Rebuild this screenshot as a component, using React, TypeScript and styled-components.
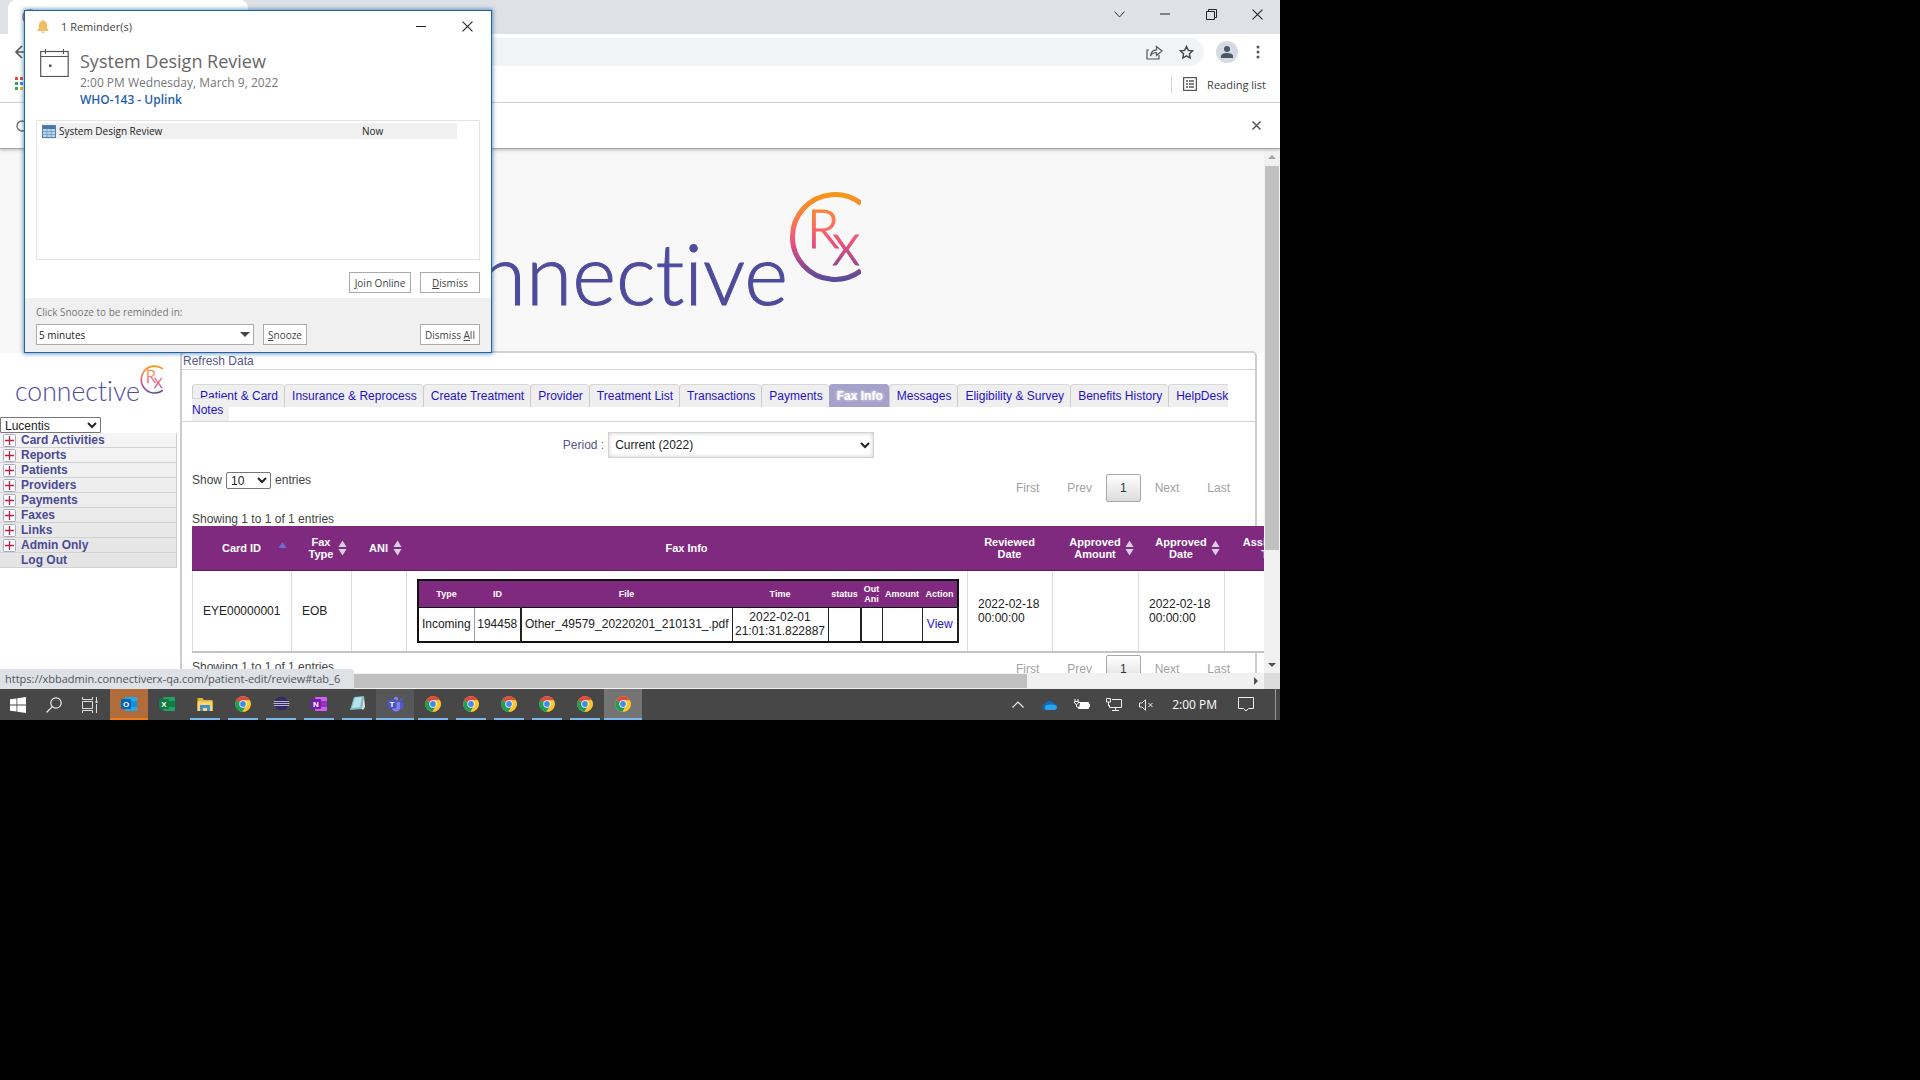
import React from "react";
import styled, { createGlobalStyle, css } from "styled-components";

const ui = `"Open Sans", "Noto Sans", sans-serif`;
const arial = `"Liberation Sans", Arial, sans-serif`;
const purple = "#7f2a7f";
const violet = "#4b4a94";

const GlobalStyle = createGlobalStyle`
  * { box-sizing: border-box; }
  body { margin: 0; background: #000; }
  button { font: inherit; color: inherit; padding: 0; border: 0; background: none; }
  ul { list-style: none; margin: 0; padding: 0; }
  svg { display: block; flex: none; }
`;

const Desktop = styled.div`
  display: grid;
  grid-template: 2fr 1fr / 2fr 1fr;
  height: 100vh;
  background: #000;
`;

const Screen = styled.div`
  position: relative;
  display: flex;
  flex-direction: column;
  min-width: 0;
  min-height: 0;
  overflow: hidden;
  background: #fff;
  font-family: ${arial};
  font-size: 12px;
`;

/* ---------- browser ---------- */

const TabStrip = styled.div`
  display: flex;
  justify-content: space-between;
  height: 34px;
  padding-left: 8px;
  background: #dee1e6;
  flex: none;
`;
const BrowserTab = styled.div`
  display: flex;
  align-items: center;
  width: 240px;
  padding-left: 14px;
  border-radius: 8px 8px 0 0;
  background: #fff;
`;
const WindowControls = styled.div`
  display: flex;
  height: 28px;
`;
const WindowButton = styled.button`
  display: grid;
  place-items: center;
  width: 46px;
`;
const Toolbar = styled.div`
  display: flex;
  align-items: center;
  gap: 12px;
  height: 36px;
  padding: 0 14px;
  flex: none;
`;
const Omnibox = styled.div`
  flex: 1;
  display: flex;
  align-items: center;
  justify-content: flex-end;
  gap: 16px;
  height: 28px;
  padding-right: 10px;
  border-radius: 14px;
  background: #f1f3f4;
`;
const IconButton = styled.button`
  display: grid;
  place-items: center;
`;
const Avatar = styled.button`
  display: grid;
  place-items: center;
  width: 22px;
  height: 22px;
  border-radius: 50%;
  background: #d6dae2;
`;
const BookmarksBar = styled.div`
  display: flex;
  align-items: center;
  justify-content: space-between;
  height: 33px;
  padding: 0 14px 4px;
  border-bottom: 1px solid #d5d7da;
  flex: none;
`;
const ReadingList = styled.button`
  display: flex;
  align-items: center;
  gap: 10px;
  height: 17px;
  padding-left: 11px;
  border-left: 1px solid #d0d2d5;
  font-family: ${ui};
  font-size: 11px;
  color: #3c4043;
`;
const InfoBar = styled.div`
  position: relative;
  display: flex;
  align-items: center;
  justify-content: space-between;
  height: 46px;
  padding: 0 19px 0 16px;
  border-bottom: 1px solid #a6a6a6;
  box-shadow: 0 1px 3px #bbb;
  flex: none;
`;

/* ---------- viewport and scroll bars ---------- */

const Viewport = styled.div`
  flex: 1;
  min-height: 0;
  display: grid;
  grid-template: minmax(0, 1fr) 16px / minmax(0, 1fr) 16px;
`;
const Page = styled.div`
  overflow: hidden;
`;
const Scrollbar = styled.div<{ $row?: boolean }>`
  display: flex;
  flex-direction: ${(p) => (p.$row ? "row" : "column")};
  background: #f1f1f1;
`;
const ScrollArrow = styled.button`
  display: grid;
  place-items: center;
  width: 16px;
  height: 16px;
`;
const ScrollThumb = styled.div<{ $share: number }>`
  flex: ${(p) => p.$share};
  margin: 1px;
  background: #c0c0c0;
`;
const ScrollRest = styled.div<{ $share: number }>`
  flex: ${(p) => p.$share};
`;
const ScrollCorner = styled.div`
  background: #dcdcdc;
`;

/* ---------- page ---------- */

const Banner = styled.header`
  height: 204px;
  padding: 42px 0 0 388px;
  background: linear-gradient(#f3f3f3, #f8f8f8 8px);
`;
const Columns = styled.div`
  display: grid;
  grid-template-columns: 180px minmax(0, 1fr);
`;
const Sidebar = styled.aside`
  padding-top: 12px;
`;
const SideLogo = styled.div`
  height: 52px;
  padding-left: 13px;
`;
const ProductSelect = styled.select`
  display: block;
  width: 101px;
  height: 16px;
  border: 1px solid #767676;
  border-radius: 1px;
  background: #fff;
  color: #222;
  font: 12px ${arial};
`;
const SideMenu = styled.ul`
  margin-right: 3px;
  border-right: 1px solid #d0d0d0;
  background: linear-gradient(#f5f5f5, #e4e4e4);
`;
const SideItem = styled.li`
  display: grid;
  grid-template-columns: 21px 1fr;
  align-items: center;
  height: 15px;
  border-bottom: 1px solid #d2d2d4;
  padding-left: 3px;
`;
const SideLink = styled.a`
  grid-column: 2;
  margin-left: -3px;
  font-weight: bold;
  line-height: 14px;
  color: ${violet};
  text-decoration: none;
`;

const Frame = styled.main`
  min-height: 400px;
  margin-right: 7px;
  border: 2px solid #ccc;
  border-top-color: #d2d2d2;
  border-radius: 5px;
  margin-top: -2px;
  background: #fff;
`;
const Refresh = styled.a`
  display: block;
  padding: 1px;
  border-bottom: 1px solid #d4d4d4;
  line-height: 14px;
  color: #55558f;
  text-decoration: none;
`;
const Tabs = styled.ul`
  padding: 19px 0 4px 10px;
  border-bottom: 1px solid #d4d4d4;
  line-height: 14px;
`;
const TabItem = styled.li`
  display: inline;
`;
const TabLink = styled.a<{ $active?: boolean }>`
  padding: 4px 6px 4px 7px;
  border-left: 1px solid #ccc;
  border-top: 1px solid #d8d8d8;
  border-radius: 4px 4px 0 0;
  background: #efeff0;
  color: #1f12c8;
  text-decoration: none;
  ${(p) =>
    p.$active &&
    css`
      background: #a5a1cb;
      border-color: #a5a1cb;
      color: #fff;
      font-weight: bold;
      text-shadow: 0 0 3px #fff;
    `}
`;
const PeriodRow = styled.div`
  display: flex;
  align-items: center;
  justify-content: center;
  gap: 4px;
  padding: 10px 0 0;
  color: #55558f;
`;
const PeriodSelect = styled.select`
  width: 266px;
  height: 26px;
  padding: 0 2px;
  border: 1px solid #d2d2d2;
  border-radius: 0;
  background: #fff;
  box-shadow: inset 0 0 4px #ccc;
  color: #222;
  font: 12px ${arial};
`;
const ListHead = styled.div`
  display: flex;
  justify-content: space-between;
  align-items: center;
  padding: 12px 11px 0 10px;
  height: 48px;
  color: #444;
`;
const LengthLabel = styled.label`
  display: flex;
  align-items: center;
  gap: 4px;
  padding-bottom: 16px;
`;
const LengthSelect = styled.select`
  width: 45px;
  height: 17px;
  border: 1px solid #767676;
  border-radius: 2px;
  background: #fff;
  color: #222;
  font: 12px ${arial};
`;
const Pager = styled.nav`
  display: flex;
  align-items: center;
`;
const PageButton = styled.button<{ $current?: boolean }>`
  height: 28px;
  padding: 0 13px;
  border: 1px solid transparent;
  border-radius: 2px;
  color: #a2a2a2;
  ${(p) =>
    p.$current &&
    css`
      border-color: #a8a8a8;
      background: linear-gradient(#fff, #dcdcdc);
      color: #333;
    `}
`;
const Summary = styled.div`
  padding: 6px 0 0 10px;
  line-height: 14px;
  color: #444;
`;
const FootRow = styled.div`
  display: flex;
  justify-content: space-between;
  padding: 2px 11px 0 10px;
  color: #444;
  line-height: 24px;
`;
const DataTable = styled.table`
  position: relative;
  table-layout: fixed;
  width: 1119px;
  margin-left: 10px;
  border-spacing: 0;
  border-bottom: 2px solid #c4c4c4;
  background: #fff;
  color: #222;
`;
const HeadCell = styled.th`
  height: 45px;
  padding: 0 4px;
  border-bottom: 1px solid #5c1c5c;
  background: ${purple};
  color: #fff;
  font-size: 11px;
  line-height: 12px;
`;
const HeadInner = styled.div<{ $sort?: boolean }>`
  display: flex;
  align-items: center;
  justify-content: center;
  ${(p) =>
    p.$sort &&
    css`
      display: grid;
      grid-template-columns: minmax(0, 1fr) auto minmax(0, 1fr);
      svg {
        grid-column: 3;
        justify-self: end;
      }
    `}
`;
const HeadText = styled.span<{ $sort?: boolean }>`
  ${(p) => p.$sort && "grid-column: 2;"}
  white-space: pre;
`;
const BodyCell = styled.td`
  height: 80px;
  padding: 0 10px;
  border-left: 1px solid #ddd;
  line-height: 14px;
`;
const FaxTable = styled.table`
  table-layout: fixed;
  width: 540px;
  border: 2px solid #111;
  border-collapse: collapse;
  text-align: center;
`;
const FaxHead = styled.th`
  height: 27px;
  padding: 0;
  border-bottom: 1px solid #111;
  background: ${purple};
  color: #fff;
  font-size: 9px;
  line-height: 10px;
`;
const FaxCell = styled.td<{ $rule: string }>`
  height: 35px;
  padding: 0;
  border-right: ${(p) => p.$rule};
  line-height: 14px;
`;
const ViewLink = styled.a`
  color: #1f12c8;
  text-decoration: none;
`;

const StatusBubble = styled.div`
  position: absolute;
  left: 0;
  bottom: 31px;
  padding: 0 14px 0 5px;
  border-radius: 0 4px 0 0;
  background: #dee1e6;
  color: #50545a;
  font-family: ${ui};
  font-size: 11px;
  line-height: 20px;
`;

/* ---------- taskbar ---------- */

const Taskbar = styled.footer`
  display: flex;
  justify-content: space-between;
  height: 31px;
  background: #474747;
  flex: none;
`;
const TaskGroup = styled.div`
  display: flex;
`;
const SystemButton = styled.button`
  display: grid;
  place-items: center;
  width: 36px;
`;
const AppButtons = styled.div`
  display: flex;
  margin-left: 2px;
`;
const AppButton = styled.button<{ $tone?: string; $line?: string; $wide?: boolean }>`
  display: grid;
  grid-template-rows: 1fr 2px;
  justify-items: center;
  align-items: center;
  width: 38px;
  background: ${(p) => p.$tone || "none"};
  &::after {
    content: "";
    width: ${(p) => (p.$wide ? "38px" : "30px")};
    height: 2px;
    background: ${(p) => p.$line || "transparent"};
  }
`;
const Tray = styled.div`
  display: flex;
  align-items: center;
  color: #fff;
  font-family: ${ui};
  font-size: 12px;
`;
const TrayButton = styled.button`
  display: grid;
  place-items: center;
  width: 32px;
`;
const Clock = styled.time`
  padding: 0 13px 0 10px;
`;
const ShowDesktop = styled.button`
  width: 5px;
  height: 31px;
  margin-left: 13px;
  border-left: 1px solid #999;
`;

/* ---------- reminder window ---------- */

const Reminder = styled.section`
  position: absolute;
  left: 24px;
  top: 10px;
  width: 468px;
  border: 1px solid #1c65ab;
  background: #fff;
  box-shadow: 0 0 4px 1px rgba(30, 90, 150, 0.6);
  font-family: ${ui};
  font-size: 10px;
  color: #444;
`;
const ReminderTitle = styled.div`
  display: flex;
  align-items: center;
  height: 30px;
  padding: 0 1px 0 12px;
  font-size: 11px;
`;
const ReminderName = styled.span`
  flex: 1;
  padding-left: 12px;
`;
const ReminderInfo = styled.div`
  display: grid;
  grid-template-columns: auto 1fr;
  gap: 11px;
  padding: 8px 15px 12px;
`;
const Heading = styled.h1`
  margin: 0;
  font-size: 18px;
  font-weight: 400;
  line-height: 25px;
  color: #666;
`;
const When = styled.p`
  margin: 0;
  font-size: 12px;
  line-height: 17px;
  color: #777;
`;
const Where = styled.p`
  margin: 0;
  font-size: 12px;
  font-weight: 600;
  line-height: 17px;
  color: #1f62ab;
`;
const ReminderList = styled.ul`
  height: 140px;
  margin: 0 11px;
  padding: 2px 22px 2px 5px;
  border: 1px solid #e4e4e4;
`;
const ReminderRow = styled.li`
  display: grid;
  grid-template-columns: auto 300px 1fr;
  align-items: center;
  gap: 3px;
  height: 16px;
  background: #f0f0f0;
  color: #222;
`;
const Actions = styled.div`
  display: flex;
  justify-content: flex-end;
  gap: 9px;
  padding: 12px 11px 5px;
`;
const WinButton = styled.button<{ $width: number }>`
  width: ${(p) => p.$width}px;
  height: 21px;
  border: 1px solid #ababab;
  background: #fff;
  color: #444;
  white-space: nowrap;
`;
const SnoozeArea = styled.div`
  padding: 5px 11px 7px;
  background: #f0f0f0;
`;
const SnoozeLabel = styled.label`
  display: block;
  line-height: 18px;
  margin-bottom: 3px;
  color: #777;
`;
const SnoozeRow = styled.div`
  display: flex;
  justify-content: space-between;
`;
const SnoozeLeft = styled.div`
  display: flex;
  gap: 9px;
`;
const SnoozePicker = styled.div`
  display: grid;
  align-items: center;
  > * {
    grid-area: 1 / 1;
  }
  svg {
    justify-self: end;
    margin-right: 4px;
    pointer-events: none;
  }
`;
const SnoozeSelect = styled.select`
  appearance: none;
  width: 218px;
  height: 21px;
  padding: 0 2px;
  border: 1px solid #ababab;
  border-radius: 0;
  background: #fff;
  color: #222;
  font: 10px ${ui};
`;

/* ---------- drawings ---------- */

const LogoText = styled.text`
  font-family: Lato, sans-serif;
  font-weight: 300;
  font-variant-ligatures: none;
`;

const Logo = ({ width, id, heavy }: { width: number; id: string; heavy?: boolean }) => (
  <svg width={width} viewBox="0 0 473 124" role="img" aria-label="connectiveRx">
    <defs>
      <linearGradient id={id} gradientUnits="userSpaceOnUse" x1="0" y1="1" x2="0" y2="91">
        <stop offset="0" stopColor="#f39a14" />
        <stop offset="0.3" stopColor="#fb7a4a" />
        <stop offset="0.55" stopColor="#f0507c" />
        <stop offset="0.8" stopColor="#9a4a8c" />
        <stop offset="1" stopColor="#4f4b9c" />
      </linearGradient>
    </defs>
    <LogoText x="400" y="114" textAnchor="end" fill="#4f4b9c" stroke="#4f4b9c" strokeWidth={heavy ? 1 : 0} fontSize="84">
      connective
    </LogoText>
    <path d="M473 12.400A42.500 42.500 0 1 0 473 79.600" fill="none" stroke={`url(#${id})`} strokeWidth="5" />
    <g fill={`url(#${id})`} stroke={`url(#${id})`} strokeWidth="1">
      <LogoText x="419" y="57" fontSize="53">R</LogoText>
      <LogoText x="444" y="74" fontSize="60">x</LogoText>
    </g>
  </svg>
);

const Cross = ({ size, color = "#222", weight = 1 }: { size: number; color?: string; weight?: number }) => (
  <svg width={size} height={size} viewBox="0 0 10 10" stroke={color} strokeWidth={weight}>
    <path d="M0.5 0.5L9.5 9.5M9.5 0.5L0.5 9.5" />
  </svg>
);

const Triangle = ({ dir, color = "#505050" }: { dir: "up" | "down" | "right"; color?: string }) => (
  <svg width="8" height="8" viewBox="0 0 8 8" fill={color}>
    <path d={{ up: "M0 6h8L4 2z", down: "M0 2h8L4 6z", right: "M2 0v8l4-4z" }[dir]} />
  </svg>
);

const SortIcon = ({ sorted }: { sorted?: boolean }) => (
  <svg width="9" height="16" viewBox="0 0 9 16">
    {sorted ? (
      <path d="M0.5 8h8L4.5 2z" fill="#6a6fd0" />
    ) : (
      <path d="M0.500 7h8L4.500 0.500zM0.500 9h8L4.500 15.500z" fill="#d8cfe0" />
    )}
  </svg>
);

const PlusBox = () => (
  <svg width="13" height="13" viewBox="0 0 13 13">
    <rect x="0.5" y="0.5" width="12" height="12" rx="1" fill="#fff" stroke="#a9a9bd" />
    <path d="M2 6.500h9M6.500 2v9" stroke="#b81d4a" strokeWidth="1.300" />
  </svg>
);

const ChromeIcon = () => (
  <svg width="16" height="16" viewBox="0 0 16 16">
    <circle cx="8" cy="8" r="7.800" fill="#fbc62e" />
    <path d="M8 8L1.200 4.200A7.800 7.800 0 0 1 14.800 4.200H8z" fill="#dd4b3e" />
    <path d="M8 8L1.200 4.200A7.800 7.800 0 0 0 7.600 15.800L11 9.600z" fill="#1f9d58" />
    <path d="M8 4.200h6.800A7.800 7.800 0 0 1 7.600 15.800L11.200 9.800z" fill="#fbc62e" />
    <circle cx="8" cy="8" r="3.700" fill="#fff" />
    <circle cx="8" cy="8" r="2.900" fill="#4a86ea" />
  </svg>
);

const OfficeIcon = ({ letter, back, mid, front }: { letter: string; back: string; mid: string; front: string }) => (
  <svg width="17" height="16" viewBox="0 0 17 16">
    <rect x="4" y="1" width="12" height="14" rx="1" fill={back} />
    <rect x="10" y="5" width="6" height="6" fill={mid} />
    <rect x="0" y="3" width="10" height="10" rx="1" fill={front} />
    <text x="5" y="11" fill="#fff" textAnchor="middle" fontFamily="Liberation Sans, sans-serif" fontWeight="bold" fontSize="8">
      {letter}
    </text>
  </svg>
);

const TeamsIcon = () => (
  <svg width="17" height="16" viewBox="0 0 17 16">
    <circle cx="9" cy="3" r="2.300" fill="#7b83eb" />
    <circle cx="14" cy="4" r="1.700" fill="#5059c9" />
    <path d="M11 6h5.500v4.500a3 3 0 0 1-4.500 2.500z" fill="#5059c9" />
    <path d="M5 6h8v5.500a4 4 0 0 1-8 0z" fill="#7b83eb" />
    <rect x="0.500" y="3.500" width="9" height="9" rx="1" fill="#4b53bc" />
    <text x="5" y="11" fill="#fff" textAnchor="middle" fontFamily="Liberation Sans, sans-serif" fontWeight="bold" fontSize="8">
      T
    </text>
  </svg>
);

const FolderIcon = () => (
  <svg width="16" height="14" viewBox="0 0 16 14">
    <path d="M0.500 1h5l1.500 2h8.500v11h-15z" fill="#e9ae35" />
    <path d="M0.500 4.500h15V14h-15z" fill="#fbd76b" />
    <path d="M3 14V8h10v6h-3v-3H6v3z" fill="#3f8fd2" />
  </svg>
);

const EclipseIcon = () => (
  <svg width="17" height="15" viewBox="0 0 17 15">
    <circle cx="8.500" cy="7.500" r="7" fill="#352a63" />
    <path d="M1 5.500h15M0.500 7.500h16M1 9.500h15" stroke="#c9c3dc" strokeWidth="0.900" />
  </svg>
);

const NotepadIcon = () => (
  <svg width="16" height="15" viewBox="0 0 16 15">
    <path d="M5 1l10-1-2 13-12 1z" fill="#7fc0cf" />
    <path d="M6 2l7-1-2 10-8 1z" fill="#b9e2e8" />
    <path d="M13 13l2-13 1 11-2 3z" fill="#e7e7e0" />
  </svg>
);

const BellIcon = () => (
  <svg width="12" height="13" viewBox="0 0 12 13" fill="#f0bd62">
    <path d="M6 0a1 1 0 0 1 1 1c2.200.5 3 2.200 3 4.200V8l1.500 2v1H.5v-1L2 8V5.200C2 3.200 2.800 1.500 5 1a1 1 0 0 1 1-1z" />
    <path d="M4.500 11.500h3a1.500 1.500 0 0 1-3 0z" />
  </svg>
);

/* ---------- data ---------- */

const menu = ["Card Activities", "Reports", "Patients", "Providers", "Payments", "Faxes", "Links", "Admin Only", "Log Out"];

const tabs = [
  "Patient & Card", "Insurance & Reprocess", "Create Treatment", "Provider", "Treatment List", "Transactions",
  "Payments", "Fax Info", "Messages", "Eligibility & Survey", "Benefits History", "HelpDesk Notes",
];

const columns: { title: string; width: number; sort?: "none" | "asc" }[] = [
  { title: "Card ID", width: 99, sort: "asc" },
  { title: "Fax\nType", width: 60, sort: "none" },
  { title: "ANI", width: 55, sort: "none" },
  { title: "Fax Info", width: 561 },
  { title: "Reviewed\nDate", width: 85 },
  { title: "Approved\nAmount", width: 86, sort: "none" },
  { title: "Approved\nDate", width: 86, sort: "none" },
  { title: "Assigned\nTo", width: 87 },
];

const thin = "1px solid #222";
const thick = "2px solid #222";
const faxColumns: { title: string; width: number; rule: string; value?: string }[] = [
  { title: "Type", width: 56, rule: "1px solid #999", value: "Incoming" },
  { title: "ID", width: 47, rule: thick, value: "194458" },
  { title: "File", width: 211, rule: thin, value: "Other_49579_20220201_210131_.pdf" },
  { title: "Time", width: 96, rule: thin, value: "2022-02-01 21:01:31.822887" },
  { title: "status", width: 33, rule: thick },
  { title: "Out Ani", width: 21, rule: thin },
  { title: "Amount", width: 40, rule: thin },
  { title: "Action", width: 36, rule: thick },
];

const Pagination = ({ label }: { label: string }) => (
  <Pager aria-label={label}>
    {["First", "Prev", "1", "Next", "Last"].map((t) => (
      <PageButton key={t} type="button" $current={t === "1"}>{t}</PageButton>
    ))}
  </Pager>
);

const officeApps = {
  outlook: <OfficeIcon letter="O" back="#28a8ea" mid="#1490df" front="#0364b8" />,
  excel: <OfficeIcon letter="X" back="#21a366" mid="#107c41" front="#107c41" />,
  onenote: <OfficeIcon letter="N" back="#ca64ea" mid="#9332bf" front="#7719aa" />,
};

const blue = "#7ab8ea";
const apps: { name: string; icon: React.ReactNode; tone?: string; line?: string; wide?: boolean }[] = [
  { name: "Outlook", icon: officeApps.outlook, tone: "#b06d3b", line: "#f47a1c", wide: true },
  { name: "Excel", icon: officeApps.excel },
  { name: "File Explorer", icon: <FolderIcon />, line: blue },
  { name: "Chrome", icon: <ChromeIcon />, line: blue },
  { name: "Eclipse", icon: <EclipseIcon />, line: blue },
  { name: "OneNote", icon: officeApps.onenote, line: blue },
  { name: "Notepad", icon: <NotepadIcon />, line: blue },
  { name: "Teams", icon: <TeamsIcon />, tone: "#565759", line: blue, wide: true },
  ...[1, 2, 3, 4, 5].map((n) => ({ name: `Chrome window ${n}`, icon: <ChromeIcon />, line: blue })),
  { name: "Chrome window 6", icon: <ChromeIcon />, tone: "#747474", line: blue, wide: true },
];

/* ---------- parts ---------- */

const Browser = () => (
  <>
    <TabStrip>
      <BrowserTab>
        <svg width="16" height="16" viewBox="0 0 16 16" fill="none" stroke="#c0566a" strokeWidth="1.500"><circle cx="8" cy="8" r="7" /></svg>
      </BrowserTab>
      <WindowControls>
        <WindowButton type="button" aria-label="Search tabs">
          <svg width="11" height="7" viewBox="0 0 11 7" fill="none" stroke="#333"><path d="M0.500 0.500L5.500 6L10.500 0.500" /></svg>
        </WindowButton>
        <WindowButton type="button" aria-label="Minimize">
          <svg width="10" height="2" viewBox="0 0 10 2" fill="#222"><path d="M0 0.500h10v1H0z" /></svg>
        </WindowButton>
        <WindowButton type="button" aria-label="Restore">
          <svg width="11" height="11" viewBox="0 0 11 11" fill="none" stroke="#222"><path d="M0.500 2.500h8v8h-8zM2.500 2.500v-2h8v8h-2" /></svg>
        </WindowButton>
        <WindowButton type="button" aria-label="Close"><Cross size={11} /></WindowButton>
      </WindowControls>
    </TabStrip>
    <Toolbar>
      <IconButton type="button" aria-label="Back">
        <svg width="14" height="14" viewBox="0 0 14 14" fill="none" stroke="#555" strokeWidth="1.600"><path d="M14 7H2M8 1L2 7l6 6" /></svg>
      </IconButton>
      <Omnibox>
        <IconButton type="button" aria-label="Share">
          <svg width="17" height="15" viewBox="0 0 17 15" fill="none" stroke="#555" strokeWidth="1.200">
            <path d="M3 5H1v9h12v-4M4.500 11C5 7 7.500 5 10.500 4.800V1.500L16 6l-5.500 4.500V7.500C8 7.500 6 8.500 4.500 11z" />
          </svg>
        </IconButton>
        <IconButton type="button" aria-label="Bookmark">
          <svg width="15" height="14" viewBox="0 0 15 14" fill="none" stroke="#444" strokeWidth="1.400">
            <path d="M7.500 1.500l1.800 3.900 4.200.5-3.100 2.900.8 4.200-3.700-2.100-3.700 2.100.8-4.200L1.500 5.900l4.200-.5z" />
          </svg>
        </IconButton>
      </Omnibox>
      <Avatar type="button" aria-label="Profile">
        <svg width="14" height="14" viewBox="0 0 14 14" fill="#4c5868"><circle cx="7" cy="4" r="3" /><path d="M1 13v-2c0-2 3-3 6-3s6 1 6 3v2z" /></svg>
      </Avatar>
      <IconButton type="button" aria-label="Menu">
        <svg width="16" height="14" viewBox="0 0 16 14" fill="#555"><circle cx="8" cy="2" r="1.500" /><circle cx="8" cy="7" r="1.500" /><circle cx="8" cy="12" r="1.500" /></svg>
      </IconButton>
    </Toolbar>
    <BookmarksBar>
      <IconButton type="button" aria-label="Apps">
        <svg width="14" height="14" viewBox="0 0 14 14">
          {["#ea4335", "#ea4335", "#ea4335", "#34a853", "#4285f4", "#fbbc05", "#34a853", "#fbbc05", "#fbbc05"].map((c, i) => (
            <rect key={i} x={1 + (i % 3) * 5} y={Math.floor(i / 3) * 5} width="3" height="3" fill={c} />
          ))}
        </svg>
      </IconButton>
      <ReadingList type="button">
        <svg width="14" height="14" viewBox="0 0 14 14" fill="none" stroke="#555">
          <rect x="0.500" y="0.500" width="13" height="13" strokeWidth="1.400" />
          <path d="M3 4h2M6 4h5M3 7h2M6 7h5M3 10h2M6 10h5" strokeWidth="1.500" />
        </svg>
        Reading list
      </ReadingList>
    </BookmarksBar>
    <InfoBar>
      <svg width="12" height="12" viewBox="0 0 12 12" fill="none" stroke="#666" strokeWidth="1.300"><circle cx="6" cy="6" r="5" /></svg>
      <IconButton type="button" aria-label="Dismiss message"><Cross size={9} color="#555" weight={1.6} /></IconButton>
    </InfoBar>
  </>
);

const FaxDetails = () => (
  <FaxTable>
    <colgroup>{faxColumns.map((c) => <col key={c.title} width={c.width} />)}</colgroup>
    <thead><tr>{faxColumns.map((c) => <FaxHead key={c.title}>{c.title}</FaxHead>)}</tr></thead>
    <tbody>
      <tr>
        {faxColumns.map((c) => (
          <FaxCell key={c.title} $rule={c.rule}>
            {c.title === "Action" ? <ViewLink href="#view">View</ViewLink> : c.value}
          </FaxCell>
        ))}
      </tr>
    </tbody>
  </FaxTable>
);

const Content = () => (
  <Frame>
    <Refresh href="#refresh">Refresh Data</Refresh>
    <Tabs>
      {tabs.map((t, i) => (
        <TabItem key={t}><TabLink href={`#tab_${i}`} $active={t === "Fax Info"}>{t}</TabLink></TabItem>
      ))}
    </Tabs>
    <PeriodRow>
      <label htmlFor="period">Period :</label>
      <PeriodSelect id="period"><option>Current (2022)</option></PeriodSelect>
    </PeriodRow>
    <ListHead>
      <LengthLabel>
        Show
        <LengthSelect><option>10</option></LengthSelect>
        entries
      </LengthLabel>
      <Pagination label="Pages" />
    </ListHead>
    <Summary>Showing 1 to 1 of 1 entries</Summary>
    <DataTable>
      <colgroup>{columns.map((c) => <col key={c.title} width={c.width} />)}</colgroup>
      <thead>
        <tr>
          {columns.map((c) => (
            <HeadCell key={c.title}>
              <HeadInner $sort={!!c.sort}>
                <HeadText $sort={!!c.sort}>{c.title}</HeadText>
                {c.sort && <SortIcon sorted={c.sort === "asc"} />}
              </HeadInner>
            </HeadCell>
          ))}
        </tr>
      </thead>
      <tbody>
        <tr>
          <BodyCell>EYE00000001</BodyCell>
          <BodyCell>EOB</BodyCell>
          <BodyCell />
          <BodyCell><FaxDetails /></BodyCell>
          <BodyCell>2022-02-18 00:00:00</BodyCell>
          <BodyCell />
          <BodyCell>2022-02-18 00:00:00</BodyCell>
          <BodyCell />
        </tr>
      </tbody>
    </DataTable>
    <FootRow>
      <span>Showing 1 to 1 of 1 entries</span>
      <Pagination label="Pages below the table" />
    </FootRow>
  </Frame>
);

const ReminderWindow = () => (
  <Reminder>
    <ReminderTitle>
      <BellIcon />
      <ReminderName>1 Reminder(s)</ReminderName>
      <WindowButton type="button" aria-label="Minimize reminders">
        <svg width="10" height="1" viewBox="0 0 10 1" fill="#222"><path d="M0 0h10v1H0z" /></svg>
      </WindowButton>
      <WindowButton type="button" aria-label="Close reminders"><Cross size={11} /></WindowButton>
    </ReminderTitle>
    <ReminderInfo>
      <svg width="29" height="28" viewBox="0 0 29 28" fill="none" stroke="#555">
        <rect x="0.700" y="2.500" width="27.500" height="25" strokeWidth="1.200" />
        <path d="M1 7.500h27M5.500 0v5M23.500 0v5" />
        <rect x="9.500" y="16" width="1.500" height="1.500" fill="#444" />
      </svg>
      <div>
        <Heading>System Design Review</Heading>
        <When>2:00 PM Wednesday, March 9, 2022</When>
        <Where>WHO-143 - Uplink</Where>
      </div>
    </ReminderInfo>
    <ReminderList>
      <ReminderRow>
        <svg width="14" height="13" viewBox="0 0 14 13">
          <rect x="0.500" y="0.500" width="13" height="12" fill="#b9d5ee" stroke="#5a7fa6" />
          <path d="M1 2.500h12" stroke="#4a78a8" strokeWidth="3" />
          <path d="M5 4v8M9 4v8M1 6.500h12M1 9.500h12" stroke="#7ba3c8" />
        </svg>
        <span>System Design Review</span>
        <span>Now</span>
      </ReminderRow>
    </ReminderList>
    <Actions>
      <WinButton type="button" $width={62}><u>J</u>oin Online</WinButton>
      <WinButton type="button" $width={60}><u>D</u>ismiss</WinButton>
    </Actions>
    <SnoozeArea>
      <SnoozeLabel htmlFor="snooze">Click Snooze to be reminded in:</SnoozeLabel>
      <SnoozeRow>
        <SnoozeLeft>
          <SnoozePicker>
            <SnoozeSelect id="snooze"><option>5 minutes</option></SnoozeSelect>
            <svg width="10" height="5" viewBox="0 0 10 5" fill="#444"><path d="M0 0h10L5 5z" /></svg>
          </SnoozePicker>
          <WinButton type="button" $width={44}><u>S</u>nooze</WinButton>
        </SnoozeLeft>
        <WinButton type="button" $width={60}>Dismiss <u>A</u>ll</WinButton>
      </SnoozeRow>
    </SnoozeArea>
  </Reminder>
);

const TaskbarRow = () => (
  <Taskbar>
    <TaskGroup>
      <SystemButton type="button" aria-label="Start">
        <svg width="16" height="16" viewBox="0 0 16 16" fill="#fff"><path d="M0 2.300L6.500 1.400V7.600H0zM7.300 1.300L16 0v7.600H7.300zM0 8.400h6.500v6.200L0 13.700zM7.300 8.400H16V16l-8.700-1.300z" /></svg>
      </SystemButton>
      <SystemButton type="button" aria-label="Search">
        <svg width="16" height="16" viewBox="0 0 16 16" fill="none" stroke="#eee" strokeWidth="1.200"><circle cx="10" cy="6" r="5.200" /><path d="M6.300 9.700L0.500 15.500" /></svg>
      </SystemButton>
      <SystemButton type="button" aria-label="Task view">
        <svg width="16" height="16" viewBox="0 0 16 16" fill="none" stroke="#ddd"><path d="M0.500 0v2.500h10V0M0.500 16v-2.500h10V16M0.500 4.500h10v7h-10zM14.500 0v4M14.500 7v9" /><rect x="13.500" y="4" width="2" height="2" fill="#ddd" stroke="none" /></svg>
      </SystemButton>
      <AppButtons>
        {apps.map((a) => (
          <AppButton key={a.name} type="button" aria-label={a.name} $tone={a.tone} $line={a.line} $wide={a.wide}>{a.icon}</AppButton>
        ))}
      </AppButtons>
    </TaskGroup>
    <Tray>
      <TrayButton type="button" aria-label="Show hidden icons">
        <svg width="12" height="7" viewBox="0 0 12 7" fill="none" stroke="#eee" strokeWidth="1.200"><path d="M0.500 6.500L6 1l5.500 5.500" /></svg>
      </TrayButton>
      <TrayButton type="button" aria-label="OneDrive">
        <svg width="16" height="10" viewBox="0 0 16 10"><path d="M3.500 10a3.300 3.300 0 0 1-.3-6.500A5 5 0 0 1 12 3.800 3.200 3.200 0 0 1 13 10z" fill="#0f6cbd" /><path d="M4 10a3 3 0 0 1 1-5l3-.5 5 .5a2.600 2.600 0 0 1 0 5z" fill="#2aa5ec" /></svg>
      </TrayButton>
      <TrayButton type="button" aria-label="Battery">
        <svg width="16" height="11" viewBox="0 0 16 11" fill="none" stroke="#fff"><path d="M5 3.500h9.500v6H4.500V8" /><path d="M6 4h8v5H5z" fill="#fff" stroke="none" /><path d="M15.500 5v3M1 0v2M4 0v2M0.500 2.500h4v1.500l-2 1.500-2-1.500zM2.500 5v3h2" /></svg>
      </TrayButton>
      <TrayButton type="button" aria-label="Network">
        <svg width="16" height="13" viewBox="0 0 16 13" fill="none" stroke="#eee"><path d="M6 1.500h9.500v8h-12V7M9.500 9.500v3M6 12.500h7M0.500 0.500h4V4h-4zM2.500 4v4" /></svg>
      </TrayButton>
      <TrayButton type="button" aria-label="Volume muted">
        <svg width="14" height="12" viewBox="0 0 14 12" fill="none" stroke="#eee"><path d="M0.500 4h2.500L6.500 0.800v10.400L3 8H0.500zM9.500 4l4 4M13.500 4l-4 4" /></svg>
      </TrayButton>
      <Clock>2:00 PM</Clock>
      <TrayButton type="button" aria-label="Notifications">
        <svg width="16" height="15" viewBox="0 0 16 15" fill="none" stroke="#eee"><path d="M0.500 0.500h15v11h-5L8 14l-2.500-2.500h-5z" /></svg>
      </TrayButton>
      <ShowDesktop type="button" aria-label="Show desktop" />
    </Tray>
  </Taskbar>
);

export default function App() {
  return (
    <Desktop>
      <GlobalStyle />
      <Screen>
        <Browser />
        <Viewport>
          <Page>
            <Banner><Logo width={473} id="logo-large" heavy /></Banner>
            <Columns>
              <Sidebar>
                <SideLogo><Logo width={150} id="logo-small" /></SideLogo>
                <ProductSelect aria-label="Product"><option>Lucentis</option></ProductSelect>
                <SideMenu>
                  {menu.map((m) => (
                    <SideItem key={m}>
                      {m !== "Log Out" && <PlusBox />}
                      <SideLink href={`#${m.replace(" ", "-").toLowerCase()}`}>{m}</SideLink>
                    </SideItem>
                  ))}
                </SideMenu>
              </Sidebar>
              <Content />
            </Columns>
          </Page>
          <Scrollbar>
            <ScrollArrow type="button" aria-label="Scroll up"><Triangle dir="up" color="#a3a3a3" /></ScrollArrow>
            <ScrollThumb $share={386} />
            <ScrollRest $share={106} />
            <ScrollArrow type="button" aria-label="Scroll down"><Triangle dir="down" /></ScrollArrow>
          </Scrollbar>
          <Scrollbar $row>
            <ScrollArrow type="button" aria-label="Scroll left"><Triangle dir="right" color="#a3a3a3" /></ScrollArrow>
            <ScrollThumb $share={1008} />
            <ScrollRest $share={220} />
            <ScrollArrow type="button" aria-label="Scroll right"><Triangle dir="right" /></ScrollArrow>
          </Scrollbar>
          <ScrollCorner />
        </Viewport>
        <TaskbarRow />
        <StatusBubble>https://xbbadmin.connectiverx-qa.com/patient-edit/review#tab_6</StatusBubble>
        <ReminderWindow />
      </Screen>
    </Desktop>
  );
}
